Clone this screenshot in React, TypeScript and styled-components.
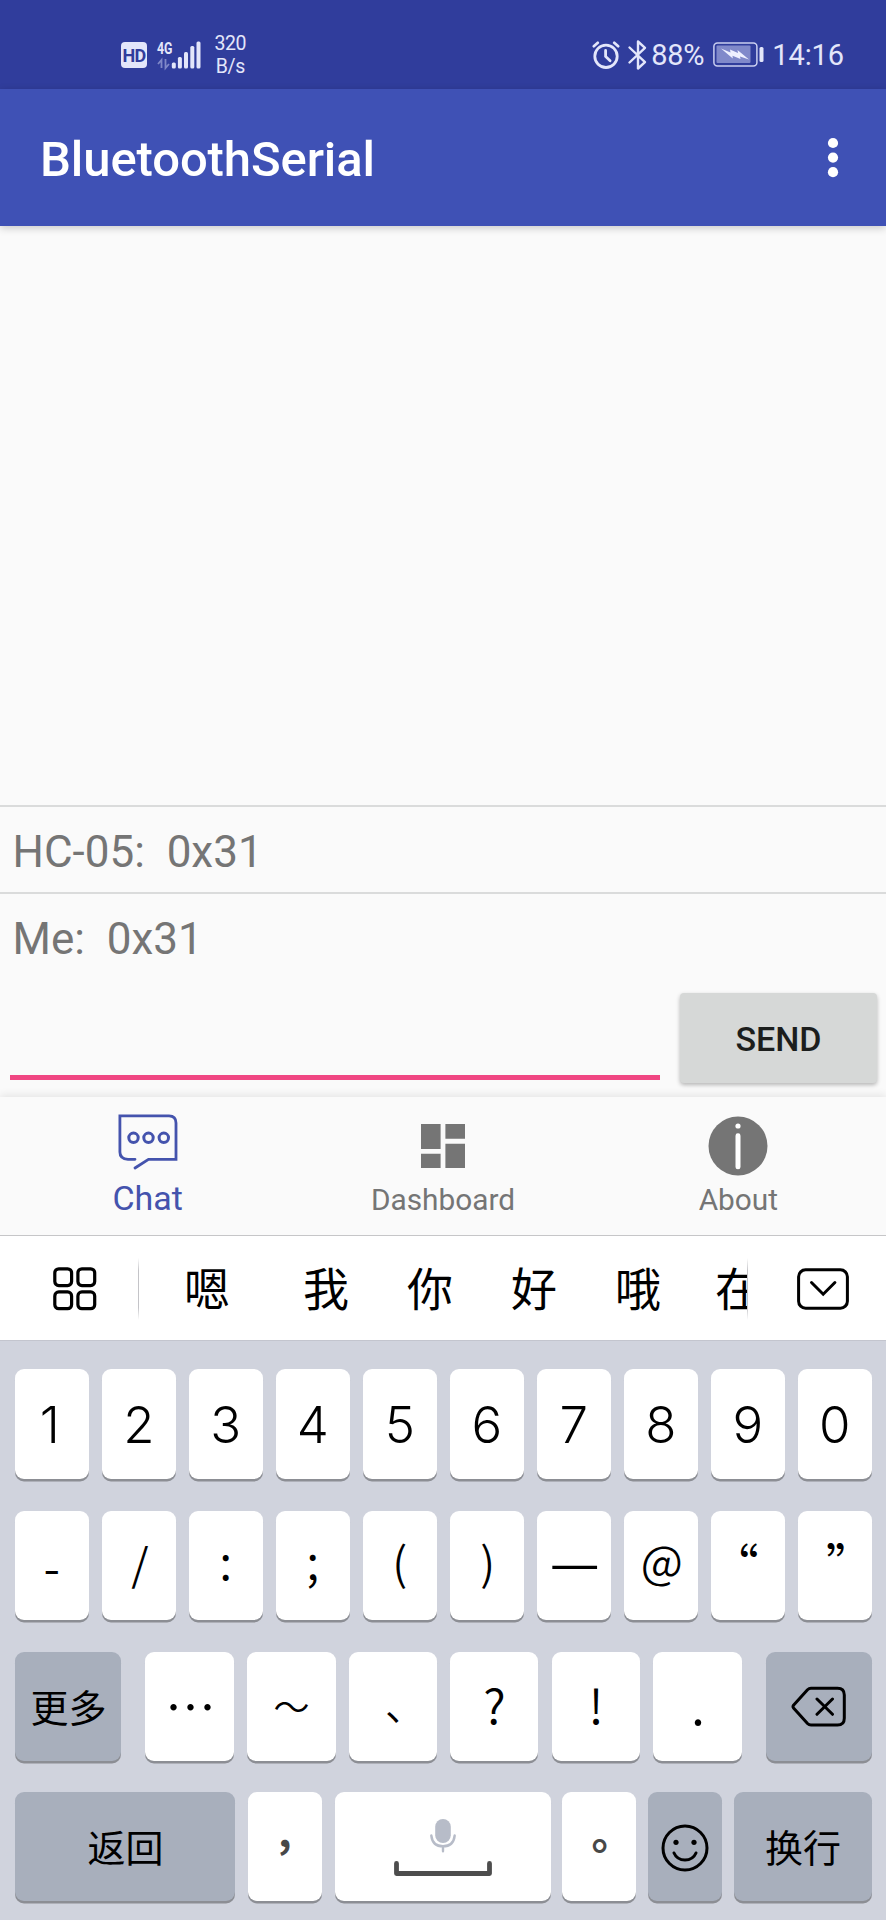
import React from 'react';
import styled, { createGlobalStyle } from 'styled-components';

const GlobalStyle = createGlobalStyle`
  * { box-sizing: border-box; }
  body { margin: 0; background: #fafafa; font-family: Roboto, "Noto Sans CJK SC", sans-serif; }
`;

const Screen = styled.div`
  width: 886px;
  height: 1920px;
  display: flex;
  flex-direction: column;
  overflow: hidden;
  background: #fafafa;
`;

const StatusBar = styled.header`
  height: 89px;
  flex: none;
  display: flex;
  justify-content: space-between;
  padding: 32.5px 42px 0 121px;
  background: #303d9c;
  color: #e3e6fa;
`;

const StatusGroup = styled.div`
  display: flex;
  align-items: center;
  height: 44px;
  svg { flex: none; display: block; overflow: visible; }
`;

const HdBadge = styled.span`
  width: 26px;
  height: 26px;
  border-radius: 4px;
  background: #e3e6fa;
  color: #303d9c;
  font: 700 18px/27px Roboto, sans-serif;
  letter-spacing: -0.8px;
  text-align: center;
  margin-right: 10px;
`;

const NetSpeed = styled.div`
  margin: 0 0 0 13.5px;
  font-size: 19.5px;
  line-height: 23px;
  text-align: center;
  letter-spacing: -0.4px;
`;

const StatusText = styled.span<{ $gap?: number; $track?: number }>`
  font-size: 29px;
  line-height: 44px;
  padding-top: 1px;
  letter-spacing: ${p => p.$track ?? 0}px;
  margin-left: ${p => p.$gap ?? 0}px;
`;

const AppBar = styled.div`
  height: 137px;
  flex: none;
  display: flex;
  align-items: center;
  justify-content: space-between;
  padding: 0 47px 0 40px;
  background: #3f51b5;
  box-shadow: 0 2px 8px rgba(0, 0, 0, 0.2);
  z-index: 1;
`;

const Title = styled.h1`
  margin: 0;
  color: #fff;
  font-size: 49px;
  font-weight: 500;
  line-height: 60px;
  padding-top: 5px;
  letter-spacing: -0.1px;
`;

const Messages = styled.main`
  flex: 1;
  display: flex;
  flex-direction: column;
  justify-content: flex-end;
`;

const Message = styled.div`
  height: 87px;
  border-top: 2px solid #dadbdb;
  padding: 5px 12.5px 0;
  font-size: 44px;
  line-height: 80px;
  color: #757575;
  white-space: pre;
`;

const Composer = styled.div`
  height: 118px;
  flex: none;
  display: flex;
  align-items: flex-start;
  justify-content: space-between;
  padding: 14px 9px 0 10px;
`;

const Field = styled.div`
  width: 650px;
  height: 87px;
  border-bottom: 5px solid #f04682;
`;

const SendButton = styled.button`
  width: 197px;
  height: 90px;
  border: 0;
  border-radius: 4px;
  background: #d6d8d7;
  color: #1c1e1d;
  font: 500 34px/40px Roboto, sans-serif;
  padding: 1px 0 0;
  box-shadow: 0 2px 4px rgba(0, 0, 0, 0.28);
`;

const BottomNav = styled.nav`
  height: 139px;
  flex: none;
  display: grid;
  grid-template-columns: repeat(3, 1fr);
  background: #fafafa;
  border-bottom: 1px solid #c6c6c8;
  box-shadow: 0 -2px 8px rgba(0, 0, 0, 0.09);
`;

const NavItem = styled.div<{ $active?: boolean }>`
  display: flex;
  flex-direction: column;
  align-items: center;
  justify-content: flex-end;
  padding-bottom: ${p => (p.$active ? 17 : 15)}px;
  color: ${p => (p.$active ? '#4453ad' : '#757575')};
  font-size: ${p => (p.$active ? 34 : 29.8)}px;
  line-height: 40px;
`;

const NavIcon = styled.svg<{ $gap: number }>`
  display: block;
  margin-bottom: ${p => p.$gap}px;
`;

const Suggestions = styled.div`
  height: 104px;
  flex: none;
  display: flex;
  align-items: center;
  background: #fff;
  padding: 1px 37px 0 53px;
  svg { display: block; flex: none; }
`;

const Divider = styled.i<{ $before?: number }>`
  width: 1px;
  height: 62px;
  margin-left: ${p => p.$before ?? 0}px;
  flex: none;
  background: linear-gradient(transparent, #c4c4c8 20%, #c4c4c8 80%, transparent);
`;

const Candidates = styled.div`
  width: 609px;
  height: 80px;
  display: flex;
  gap: 58px;
  overflow: hidden;
  padding-left: 45px;
  font: 400 46px/74px "Noto Sans CJK SC", sans-serif;
  color: #000;
  span { flex: none; }
  span:first-child { margin-right: 15px; }
  span:last-child { margin-left: -4px; }
`;

const Keyboard = styled.section`
  height: 580px;
  flex: none;
  background: #d0d3dd;
  border-top: 1px solid #c3c5ce;
  padding: 28px 14.5px 0 15px;
`;

const KeyRow = styled.div<{ $h?: number; $gap?: number; $after?: number }>`
  display: flex;
  height: ${p => p.$h ?? 109}px;
  gap: ${p => p.$gap ?? 13.3}px;
  margin-bottom: ${p => p.$after ?? 32}px;
`;

const Key = styled.button<{ $w?: number; $dark?: boolean; $before?: number; $muted?: boolean }>`
  ${p => (p.$w ? `flex: none; width: ${p.$w}px;` : 'flex: 1 1 0; min-width: 0;')}
  height: 100%;
  margin: 0 0 0 ${p => p.$before ?? 0}px;
  padding: 0;
  border: 0;
  border-radius: 9px;
  background: ${p => (p.$dark ? '#a8afbc' : '#fff')};
  box-shadow: 0 2.5px 0 #8c8e94;
  color: ${p => (p.$muted ? '#484848' : '#000')};
  display: flex;
  align-items: center;
  justify-content: center;
  svg { display: block; flex: none; }
`;

const Digit = styled.span<{ $dx?: number }>`
  font: 360 51px/60px Inter, sans-serif;
  margin: 1px ${p => -(p.$dx ?? 0)}px 0 ${p => p.$dx ?? 0}px;
`;

const Word = styled.span`
  font: 400 38px/50px "Noto Sans CJK SC", sans-serif;
  margin: -1px 0 0 1px;
`;

const Mark = styled.span<{ $size?: number; $dx?: number; $dy?: number; $weight?: number }>`
  font: ${p => p.$weight ?? 350} ${p => p.$size ?? 48}px/60px "Noto Sans CJK SC", sans-serif;
  margin: ${p => p.$dy ?? 0}px ${p => -(p.$dx ?? 0)}px ${p => -(p.$dy ?? 0)}px ${p => p.$dx ?? 0}px;
`;

type MarkSpec = { t: string; size?: number; dx?: number; dy?: number };

const symbolRow: MarkSpec[] = [
  { t: '-', dy: -1 }, { t: '/', size: 44, dx: 1, dy: -4 }, { t: ':', dy: -7 }, { t: ';', dy: -7 },
  { t: '(', size: 45, dy: -5 }, { t: ')', size: 45, dx: 1, dy: -5 },
  { t: '—', size: 56, dx: 1, dy: -7 }, { t: '@', size: 45, dx: 1, dy: -6 },
  { t: '“', dx: -13, dy: -3 }, { t: '”', dx: 15, dy: -3 },
];

const marksRow: (MarkSpec & { w: number })[] = [
  { t: '…', w: 89, size: 51, dx: 1, dy: -2 }, { t: '～', w: 88.5, size: 36, dy: -2 },
  { t: '、', w: 88, size: 40, dx: 12, dy: -4 }, { t: '?', w: 88, dy: -4 },
  { t: '!', w: 88.5, dy: -4 }, { t: '.', w: 89, size: 52, dy: -4 },
];

const Signal = () => (
  <svg width="44" height="28" viewBox="0 0 44 28" fill="#e3e6fa">
    <text x="0" y="12.5" fontFamily="Roboto, sans-serif" fontWeight="700" fontSize="16.5" textLength="15.5" lengthAdjust="spacingAndGlyphs">4G</text>
    <g fill="none" stroke="#7f88c8" strokeWidth="1.8"><path d="M4.5 27v-8l-3.5 4M8.5 18v9l3.5-4" /></g>
    <rect x="14.8" y="21.5" width="4" height="6" rx="1.5" />
    <rect x="20.9" y="16" width="4" height="11.5" rx="1.5" />
    <rect x="27" y="11" width="4" height="16.5" rx="1.5" />
    <rect x="33.3" y="5" width="4" height="22.5" rx="1.5" />
    <rect x="39.5" y="0.5" width="4" height="27" rx="1.5" />
  </svg>
);

const Alarm = () => (
  <svg width="28" height="28" viewBox="0 0 28 28" fill="none" stroke="#e3e6fa" strokeWidth="2.8" strokeLinecap="round">
    <circle cx="14" cy="15.3" r="11.2" />
    <path d="M13.6 9.5v6l4.5 4.2M1.8 5.2l4-3.4M26.2 5.2l-4-3.4" />
  </svg>
);

const BluetoothIcon = styled.svg`
  margin-left: 8px;
`;

const Bluetooth = () => (
  <BluetoothIcon width="19" height="30" viewBox="0 0 19 30" fill="none" stroke="#e3e6fa" strokeWidth="2.4" strokeLinejoin="round" strokeLinecap="round">
    <path d="M1.5 7.5 17 22.2l-7 6.3V1.5l7 6.3L1.5 22.5" />
  </BluetoothIcon>
);

const BatteryIcon = styled.svg`
  margin-left: 8.5px;
`;

const Battery = () => (
  <BatteryIcon width="51" height="26" viewBox="0 0 51 26">
    <rect x="0.9" y="0.9" width="43" height="23" rx="3.5" fill="none" stroke="#c9cef0" strokeWidth="1.5" />
    <rect x="3.5" y="3.5" width="34" height="17.5" rx="1" fill="#8089ca" />
    <path d="M8 6.5 17.5 10.5 17 7.5 25 11 24.5 8 36 17.5 27 14.5 27.5 17 19.5 13.8 19.8 16.5Z" fill="#eef0ff" />
    <rect x="46.5" y="5" width="4" height="15" rx="1.5" fill="#e3e6fa" />
  </BatteryIcon>
);

const Overflow = () => (
  <svg width="12" height="42" viewBox="0 0 12 42" fill="#fff">
    <circle cx="6" cy="6" r="5.1" /><circle cx="6" cy="20.6" r="5.1" /><circle cx="6" cy="35.2" r="5.1" />
  </svg>
);

const CollapseIcon = styled.svg`
  margin-left: 49.5px;
`;

export default function App() {
  return (
    <Screen>
      <GlobalStyle />
      <StatusBar>
        <StatusGroup>
          <HdBadge>HD</HdBadge>
          <Signal />
          <NetSpeed>320<br />B/s</NetSpeed>
        </StatusGroup>
        <StatusGroup>
          <Alarm />
          <Bluetooth />
          <StatusText $gap={4.5} $track={-0.3}>88%</StatusText>
          <Battery />
          <StatusText $gap={8.5} $track={-0.1}>14:16</StatusText>
        </StatusGroup>
      </StatusBar>
      <AppBar>
        <Title>BluetoothSerial</Title>
        <Overflow />
      </AppBar>
      <Messages>
        <Message>{'HC-05:  0x31'}</Message>
        <Message>{'Me:  0x31'}</Message>
      </Messages>
      <Composer>
        <Field />
        <SendButton>SEND</SendButton>
      </Composer>
      <BottomNav>
        <NavItem $active>
          <NavIcon $gap={8} width="60" height="56" viewBox="0 0 60 56" fill="none" stroke="#4453ad" strokeWidth="2.8">
            <path d="M17 45.3H10Q1.9 45 1.9 38V1.9H51Q58 2 58 9V45.3H30.5L17 54" strokeLinecap="round" />
            <circle cx="15.5" cy="23.8" r="4.7" strokeWidth="3" />
            <circle cx="30.5" cy="23.8" r="4.7" strokeWidth="3" />
            <circle cx="45.8" cy="23.8" r="4.7" strokeWidth="3" />
          </NavIcon>
          Chat
        </NavItem>
        <NavItem>
          <NavIcon $gap={12} width="44" height="44" viewBox="0 0 44 44" fill="#757575">
            <path d="M0 0h19.6v25H0zM0 29.8h19.6V44H0zM24.4 0H44v14.8H24.4zM24.4 19.8H44V44H24.4z" />
          </NavIcon>
          Dashboard
        </NavItem>
        <NavItem>
          <NavIcon $gap={4} width="60" height="60" viewBox="0 0 60 60">
            <circle cx="30" cy="30" r="29.5" fill="#757575" />
            <circle cx="30" cy="10" r="2.6" fill="#fff" />
            <rect x="27.5" y="17.3" width="5" height="36" rx="2.4" fill="#fff" />
          </NavIcon>
          About
        </NavItem>
      </BottomNav>
      <Suggestions>
        <svg width="44" height="44" viewBox="0 0 44 44" fill="none" stroke="#000" strokeWidth="3.2">
          <rect x="1.8" y="1.8" width="16.8" height="16.8" rx="4" />
          <rect x="24.9" y="1.8" width="16.8" height="16.8" rx="4" />
          <rect x="1.8" y="24.9" width="16.8" height="16.8" rx="4" />
          <rect x="24.9" y="24.9" width="16.8" height="16.8" rx="4" />
        </svg>
        <Divider $before={41} />
        <Candidates>
          {['嗯', '我', '你', '好', '哦', '在'].map(c => <span key={c}>{c}</span>)}
        </Candidates>
        <Divider />
        <CollapseIcon width="52" height="42" viewBox="0 0 52 42" fill="none" stroke="#000" strokeWidth="3">
          <rect x="1.6" y="1.8" width="48.8" height="38.4" rx="7" />
          <path d="m14.5 14.5 11.7 11.7 11.7-11.7" strokeLinecap="round" />
        </CollapseIcon>
      </Suggestions>
      <Keyboard>
        <KeyRow $h={110}>
          {['1', '2', '3', '4', '5', '6', '7', '8', '9', '0'].map(d => (
            <Key key={d}><Digit $dx={d === '1' ? -2 : 0}>{d}</Digit></Key>
          ))}
        </KeyRow>
        <KeyRow>
          {symbolRow.map(m => (
            <Key key={m.t}><Mark $size={m.size} $dx={m.dx} $dy={m.dy}>{m.t}</Mark></Key>
          ))}
        </KeyRow>
        <KeyRow $after={31}>
          <Key $dark $w={106}><Word>更多</Word></Key>
          {marksRow.map((m, i) => (
            <Key key={m.t} $w={m.w} $before={i === 0 ? 10.7 : 0}>
              <Mark $size={m.size} $dx={m.dx} $dy={m.dy}>{m.t}</Mark>
            </Key>
          ))}
          <Key $dark $before={10}>
            <svg width="56" height="42" viewBox="0 0 56 42" fill="none" stroke="#000" strokeWidth="3" strokeLinejoin="round" strokeLinecap="round">
              <path d="M20 2.2H46.5Q53.3 2.2 53.3 9V32.2Q53.3 39 46.5 39H20Q18 39 16.5 37.5L2.5 22Q1.5 20.6 2.5 19.2L16.5 3.7Q18 2.2 20 2.2ZM26 13 41.5 28.3M41.5 13 26 28.3" />
            </svg>
          </Key>
        </KeyRow>
        <KeyRow $gap={0}>
          <Key $dark $w={220}><Word>返回</Word></Key>
          <Key $w={73.7} $before={13} $muted><Mark $size={42} $dy={-18} $weight={700}>,</Mark></Key>
          <Key $w={216} $before={13.3}>
            <svg width="100" height="60" viewBox="0 0 100 60" fill="none" strokeLinecap="round">
              <rect x="42.2" y="2" width="15.6" height="24" rx="7.8" fill="#b7bcc8" />
              <path d="M38.3 18.5Q39.5 29.3 50 29.3T61.7 18.5M50 30v4.3" stroke="#b7bcc8" strokeWidth="2.4" />
              <path d="M3.5 46.5V56.5H96.5V46.5" stroke="#4d4d4d" strokeWidth="4.8" strokeLinejoin="round" />
            </svg>
          </Key>
          <Key $w={74} $before={11.5} $muted><Mark $size={42} $weight={700} $dx={13} $dy={-16}>。</Mark></Key>
          <Key $dark $w={73.7} $before={11.5}>
            <svg width="50" height="50" viewBox="0 0 50 50" fill="none" stroke="#000" strokeWidth="3" strokeLinecap="round">
              <circle cx="25" cy="26" r="22" />
              <path d="M14 31Q17 38 25 38T36 31" />
              <g fill="#000" stroke="none"><circle cx="16" cy="20.3" r="2.6" /><circle cx="34" cy="20.3" r="2.6" /></g>
            </svg>
          </Key>
          <Key $dark $before={12}><Word>换行</Word></Key>
        </KeyRow>
      </Keyboard>
    </Screen>
  );
}
